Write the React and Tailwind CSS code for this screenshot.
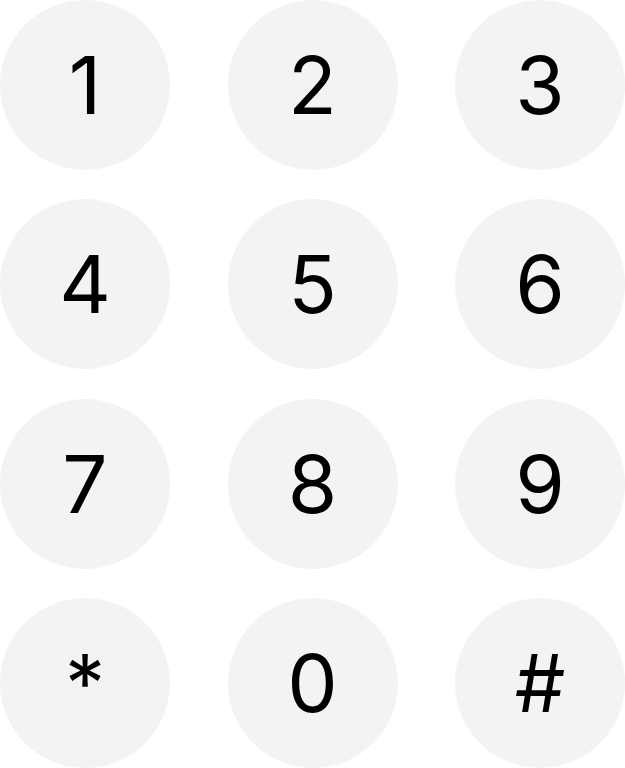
import React from "react";

const keys = ["1", "2", "3", "4", "5", "6", "7", "8", "9", "*", "0", "#"];

function App() {
        return (
                <div className="w-[625px] h-[768px] bg-white grid grid-cols-3 gap-x-[57.5px] gap-y-[29.33px] font-['Inter',sans-serif]">
                        {keys.map((k) => (
                                <button
                                        key={k}
                                        className="w-full aspect-square rounded-full bg-[#f2f3f5] flex items-center justify-center text-[80px] leading-none text-black font-normal"
                                >
                                        {k}
                                </button>
                        ))}
                </div>
        );
}

export default App;
